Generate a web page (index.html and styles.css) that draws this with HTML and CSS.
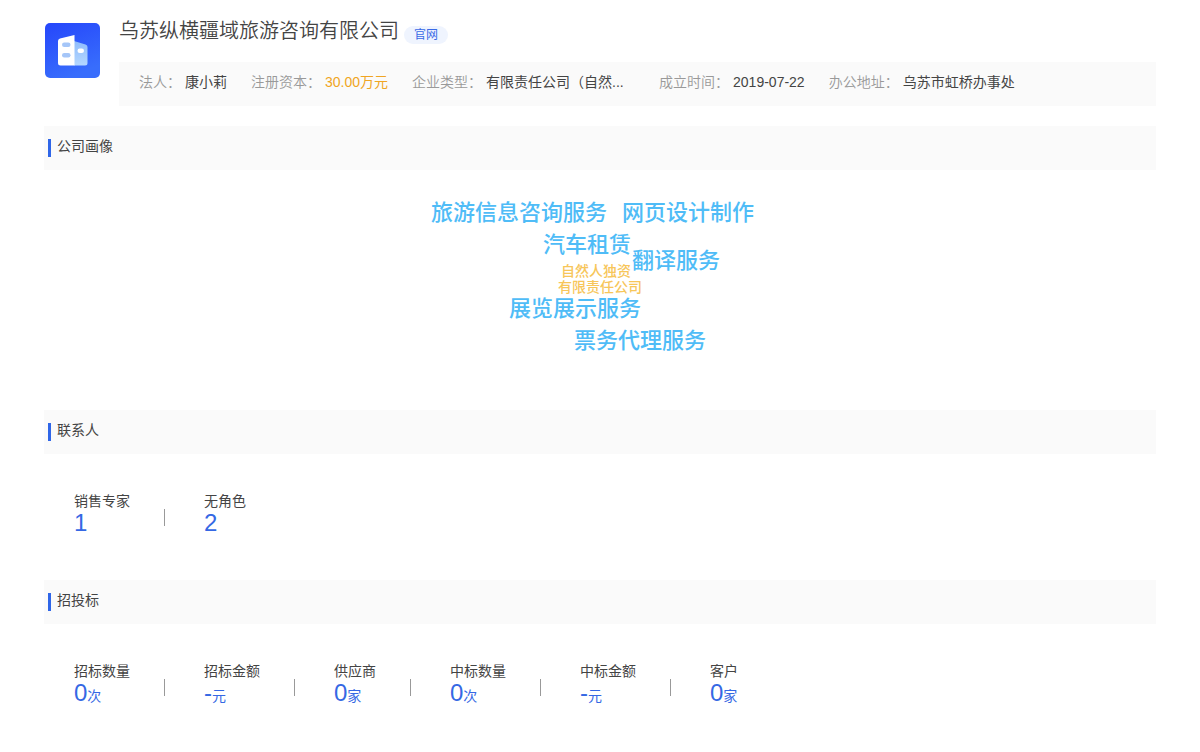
FILE: index.html
```html
<!DOCTYPE html>
<html lang="zh-CN">
<head>
<meta charset="utf-8">
<title>乌苏纵横疆域旅游咨询有限公司</title>
<link rel="stylesheet" href="styles.css">
</head>
<body>
<main class="page">
  <header class="company">
    <svg class="logo" viewBox="0 0 55 55" aria-hidden="true">
      <defs>
        <linearGradient id="logo-bg" x1="0" y1="0" x2="0.4" y2="1">
          <stop offset="0" stop-color="#2546fb"/>
          <stop offset="1" stop-color="#386dfc"/>
        </linearGradient>
        <linearGradient id="logo-side" x1="0" y1="0" x2="0" y2="1">
          <stop offset="0" stop-color="#8fbcfb"/>
          <stop offset="1" stop-color="#b4d7ff"/>
        </linearGradient>
      </defs>
      <rect width="55" height="55" rx="5" fill="url(#logo-bg)"/>
      <path d="M29 18l11.500 3.500q2 .7 2 2.500v16q0 2.500-2.500 2.500H29z" fill="url(#logo-side)"/>
      <path d="M29.500 12v30.500h-14q-2.500 0-2.500-2.500V18q0-2 2-2.600z" fill="#fff"/>
      <rect x="17" y="19.500" width="8.500" height="4.500" rx="2.200" fill="#a5c6f8"/>
      <rect x="17" y="30" width="8.500" height="4.500" rx="2.200" fill="#a5c6f8"/>
      <rect x="32.500" y="25.500" width="6.500" height="4.500" rx="2.200" fill="#fff"/>
    </svg>
    <div class="company-body">
      <div class="title-row">
        <h1 class="name">乌苏纵横疆域旅游咨询有限公司</h1>
        <a class="site" href="#">官网</a>
      </div>
      <dl class="facts">
        <div class="fact"><dt>法人：</dt><dd>康小莉</dd></div>
        <div class="fact"><dt>注册资本：</dt><dd class="money">30.00万元</dd></div>
        <div class="fact"><dt>企业类型：</dt><dd class="kind">有限责任公司（自然...</dd></div>
        <div class="fact"><dt>成立时间：</dt><dd>2019-07-22</dd></div>
        <div class="fact"><dt>办公地址：</dt><dd>乌苏市虹桥办事处</dd></div>
      </dl>
    </div>
  </header>

  <section>
    <h2 class="bar">公司画像</h2>
    <div class="cloud-wrap">
      <div class="cloud">
        <span class="word w1">旅游信息咨询服务</span>
        <span class="word w2">网页设计制作</span>
        <span class="word w3">汽车租赁</span>
        <span class="word w4">翻译服务</span>
        <span class="word small w5">自然人独资</span>
        <span class="word small w6">有限责任公司</span>
        <span class="word w7">展览展示服务</span>
        <span class="word w8">票务代理服务</span>
      </div>
    </div>
  </section>

  <section>
    <h2 class="bar">联系人</h2>
    <dl class="stats">
      <div class="stat"><dt>销售专家</dt><dd>1</dd></div>
      <div class="stat"><dt>无角色</dt><dd>2</dd></div>
    </dl>
  </section>

  <section>
    <h2 class="bar">招投标</h2>
    <dl class="stats">
      <div class="stat"><dt>招标数量</dt><dd>0<small>次</small></dd></div>
      <div class="stat"><dt>招标金额</dt><dd>-<small>元</small></dd></div>
      <div class="stat"><dt>供应商</dt><dd>0<small>家</small></dd></div>
      <div class="stat"><dt>中标数量</dt><dd>0<small>次</small></dd></div>
      <div class="stat"><dt>中标金额</dt><dd>-<small>元</small></dd></div>
      <div class="stat"><dt>客户</dt><dd>0<small>家</small></dd></div>
    </dl>
  </section>
</main>
</body>
</html>
```
FILE: styles.css
```css
* {
  box-sizing: border-box;
  margin: 0;
  padding: 0;
}

body {
  background: #fff;
  color: #444;
  font-family: "Liberation Sans", "Noto Sans CJK SC", sans-serif;
  font-size: 14px;
  line-height: 20px;
}

.page {
  padding: 18px 44px;
}

.company {
  display: flex;
  gap: 19px;
  margin-bottom: 20px;
}

.logo {
  flex: none;
  width: 55px;
  height: 55px;
  margin: 5px 0 0 1px;
}

.company-body {
  flex: 1;
  min-width: 0;
}

.title-row {
  display: flex;
  align-items: flex-end;
  gap: 5px;
  padding-bottom: 18px;
}

.name {
  font-size: 20px;
  font-weight: 350;
  line-height: 26px;
}

.site {
  padding: 0 10px;
  border-radius: 9px;
  background: #eff4fe;
  color: #3a6ae6;
  font-size: 12px;
  line-height: 18px;
  text-decoration: none;
}

.facts {
  display: flex;
  gap: 24px;
  padding: 10px 20px 14px;
  background: #fafafa;
}

.fact {
  display: flex;
  gap: 4px;
  white-space: nowrap;
}

.fact dt {
  color: #999;
  font-weight: 350;
}

.money {
  color: #f0a523;
}

.kind {
  min-width: 149px;
}

.bar {
  display: flex;
  align-items: center;
  gap: 6px;
  height: 44px;
  padding: 0 4px 4px;
  background: #fafafa;
  font-size: 14px;
  font-weight: 400;
}

.bar::before {
  content: "";
  width: 3px;
  height: 18px;
  margin-top: 4px;
  background: #2f66e8;
}

.cloud-wrap {
  display: flex;
  justify-content: center;
  height: 240px;
}

.cloud {
  position: relative;
  width: 340px;
}

.word {
  position: absolute;
  color: #4fbcf7;
  font-size: 22px;
  font-weight: 500;
  line-height: 32px;
  white-space: nowrap;
}

.small {
  color: #f7c65a;
  font-size: 14px;
  line-height: 16px;
}

.w1 { left: 1px; top: 27px; }
.w2 { left: 192px; top: 27px; }
.w3 { left: 113px; top: 59px; }
.w4 { left: 202px; top: 75px; }
.w5 { left: 131px; top: 93px; }
.w6 { left: 128px; top: 109px; }
.w7 { left: 79px; top: 123px; }
.w8 { left: 144px; top: 155px; }

.stats {
  display: flex;
  padding: 37px 30px 45px;
}

.stat {
  display: flex;
  flex-direction: column;
  position: relative;
  margin-right: 74px;
}

.stat:not(:last-child)::after {
  content: "";
  position: absolute;
  right: -35px;
  top: 18px;
  width: 1px;
  height: 17px;
  background: #999;
}

.stat dd {
  color: #3568e4;
  font-size: 24px;
  line-height: 24px;
}

.stat small {
  font-size: 14px;
}
```
